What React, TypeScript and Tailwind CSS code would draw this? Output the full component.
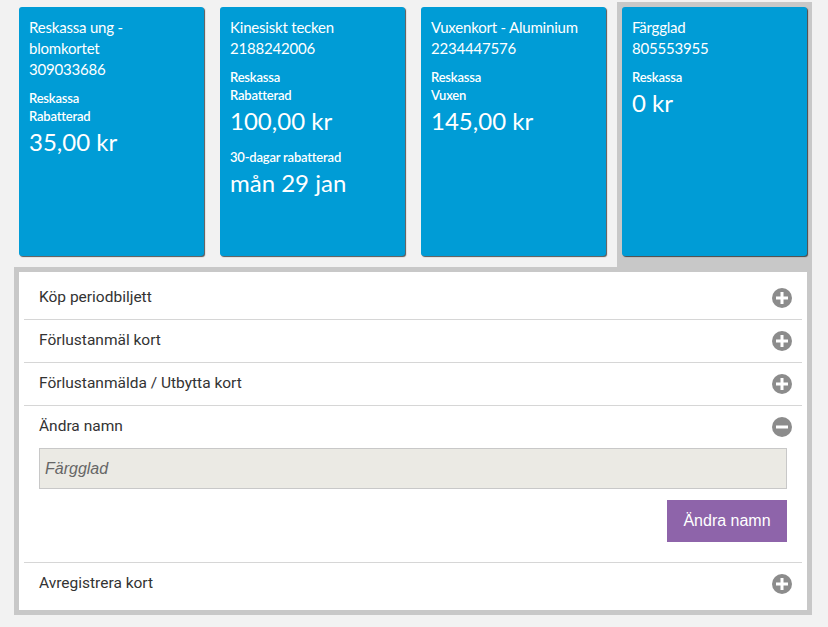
import React from "react";

type Card = {
  title: string[];
  groups: { labels: string[]; value: string }[];
  selected?: boolean;
};

const cards: Card[] = [
  {
    title: ["Reskassa ung -", "blomkortet", "309033686"],
    groups: [{ labels: ["Reskassa", "Rabatterad"], value: "35,00 kr" }],
  },
  {
    title: ["Kinesiskt tecken", "2188242006"],
    groups: [
      { labels: ["Reskassa", "Rabatterad"], value: "100,00 kr" },
      { labels: ["30-dagar rabatterad"], value: "mån 29 jan" },
    ],
  },
  {
    title: ["Vuxenkort - Aluminium", "2234447576"],
    groups: [{ labels: ["Reskassa", "Vuxen"], value: "145,00 kr" }],
  },
  {
    title: ["Färgglad", "805553955"],
    groups: [{ labels: ["Reskassa"], value: "0 kr" }],
    selected: true,
  },
];

function CircleIcon({ minus }: { minus?: boolean }) {
  return (
    <svg width="20" height="20" viewBox="0 0 20 20">
      <circle cx="10" cy="10" r="10" fill="#8c8c8c" />
      <rect x="4" y="8.5" width="12" height="3" fill="#fff" />
      {!minus && <rect x="8.5" y="4" width="3" height="12" fill="#fff" />}
    </svg>
  );
}

function Row({ label, open, children }: { label: string; open?: boolean; children?: React.ReactNode }) {
  return (
    <div className="border-b border-[#d6d6d6] last:border-b-0">
      <div className="flex h-[42px] items-center justify-between pl-[15px] pr-[10px]">
        <span
          className="text-[15.5px] text-[#333]"
          style={{ fontFamily: 'Roboto, "Liberation Sans", sans-serif' }}
        >
          {label}
        </span>
        <CircleIcon minus={open} />
      </div>
      {children}
    </div>
  );
}

export default function App() {
  return (
    <div
      className="h-[627px] w-[828px] bg-[#f2f2f2] pt-[2px]"
      style={{ fontFamily: '"Liberation Sans", Arial, sans-serif' }}
    >
      <div className="ml-[14px] w-[798px]">
        <div className="grid grid-cols-4 gap-[6px]">
          {cards.map((c, i) => (
            <div key={i} className={`px-[5px] pt-[5px] pb-[11px] ${c.selected ? "bg-[#c8c8c8]" : ""}`}>
              <div
                className="h-[249px] rounded-[3px] bg-[#009cd6] pl-[10px] pt-[10px] text-white shadow-[1px_1px_1px_rgba(0,0,0,0.65)]"
                style={{ fontFamily: 'Lato, "Liberation Sans", sans-serif' }}
              >
                <div className="text-[15px] leading-[21px] tracking-[-0.2px]">
                  {c.title.map((t, j) => (
                    <div key={j}>{t}</div>
                  ))}
                </div>
                {c.groups.map((g, j) => (
                  <div key={j} className={j === 0 ? "mt-[9px]" : "mt-[12px]"}>
                    {g.labels.map((l, k) => (
                      <div key={k} className="text-[13px] font-semibold leading-[18px] tracking-[-0.2px]">
                        {l}
                      </div>
                    ))}
                    <div className="mt-[2px] text-[24px] leading-[30px]">{g.value}</div>
                  </div>
                ))}
              </div>
            </div>
          ))}
        </div>
        <div className="border-[5px] border-[#c8c8c8] bg-white p-[5px]">
          <Row label="Köp periodbiljett" />
          <Row label="Förlustanmäl kort" />
          <Row label="Förlustanmälda / Utbytta kort" />
          <Row label="Ändra namn" open>
            <div className="pl-[15px] pr-[15px] pb-[20px]">
              <div className="flex h-[41px] items-center border border-[#c8c8c8] bg-[#ebeae4] pl-[5px] text-[16px] italic text-[#666]">
                Färgglad
              </div>
              <div className="mt-[11px] flex justify-end">
                <button className="h-[42px] w-[120px] bg-[#8e64aa] text-[16px] text-white">Ändra namn</button>
              </div>
            </div>
          </Row>
          <Row label="Avregistrera kort" />
        </div>
      </div>
    </div>
  );
}
